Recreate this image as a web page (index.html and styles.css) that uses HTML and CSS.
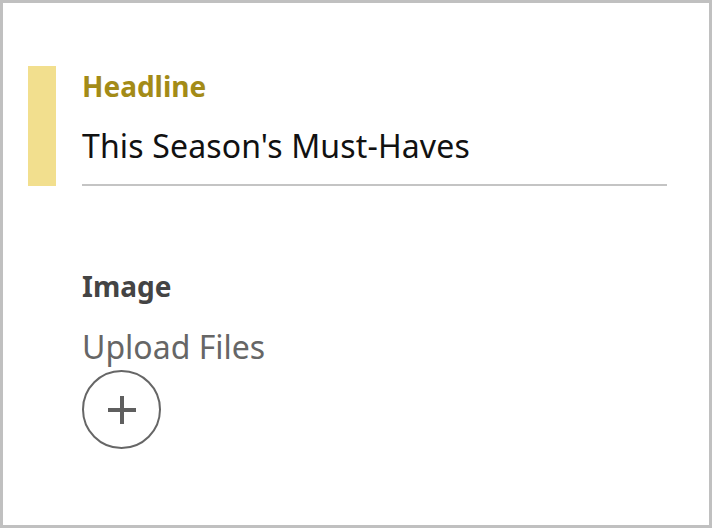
FILE: index.html
```html
<!DOCTYPE html>
<html lang="en">
<head>
  <meta charset="UTF-8">
  <title>Edit Block</title>
  <link rel="stylesheet" href="styles.css">
</head>
<body>
  <div class="panel">

    <!-- Headline field, highlighted -->
    <div class="field field-active">
      <div class="accent"></div>
      <div class="field-body">
        <div class="field-label">Headline</div>
        <div class="field-value">This Season's Must-Haves</div>
      </div>
    </div>

    <!-- Image field -->
    <div class="field field-image">
      <div class="field-body">
        <div class="field-label">Image</div>
        <div class="upload-text">Upload Files</div>
        <button class="upload-btn" aria-label="Add file">
          <svg width="30" height="30" viewBox="0 0 30 30">
            <path d="M15 1v28M1 15h28" stroke="#5f5f5f" stroke-width="4" fill="none"/>
          </svg>
        </button>
      </div>
    </div>

  </div>
</body>
</html>
```

FILE: styles.css
```css
html, body {
  margin: 0; padding: 0;
  height: 100%;
}
body {
  box-sizing: border-box;
  border: 3px solid #c0c0c0;
  background-color: #fff;
  font-family: "Noto Sans", "Open Sans", sans-serif;
}
.panel {
  padding: 63px 42px 0 25px;
}
.field {
  display: flex;
}
.accent {
  width: 28px;
  background-color: #f2df8e;
  flex-shrink: 0;
}
.field-body {
  flex: 1;
  margin-left: 26px;
}
.field-label {
  font-size: 28px;
  font-weight: bold;
  line-height: 38px;
  color: #444;
}
.field-active .field-label {
  color: #a38b17;
  margin-top: 1px;
}
.field-value {
  font-size: 32px;
  letter-spacing: 0.15px;
  line-height: 40px;
  color: #111;
  padding: 21px 0 18px;
  border-bottom: 2px solid #c4c4c4;
}

/* Image upload block */
.field-image {
  margin-top: 81px;
}
.field-image .field-body {
  margin-left: 54px;
}
.upload-text {
  font-size: 32px;
  line-height: 40px;
  color: #666;
  margin-top: 22px;
}
.upload-btn {
  display: flex;
  align-items: center;
  justify-content: center;
  width: 79px; height: 79px;
  margin-top: 3px;
  padding: 0;
  border: 2px solid #666;
  border-radius: 50%;
  background: #fff;
  cursor: pointer;
}
```
